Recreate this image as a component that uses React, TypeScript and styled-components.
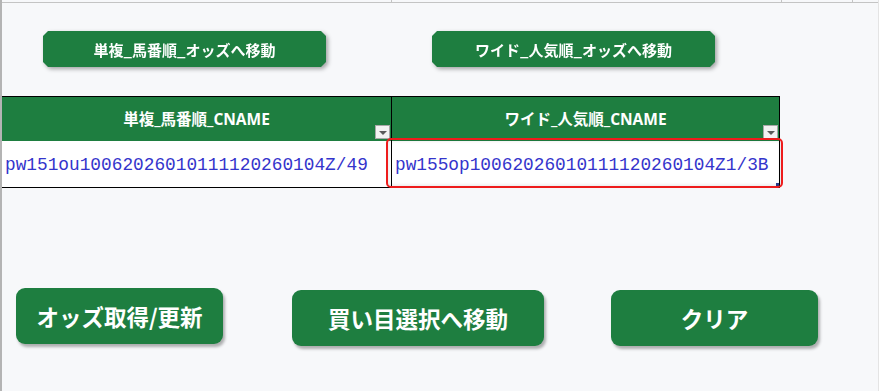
import styled, { createGlobalStyle } from "styled-components";

const GlobalStyle = createGlobalStyle`
  html, body {
    margin: 0;
    padding: 0;
    background: #f7f8fa;
  }
`;

const GREEN = "#1e7e40";

const Page = styled.div`
  position: relative;
  width: 879px;
  height: 391px;
  box-sizing: border-box;
  border-left: 2px solid #b4b4b4;
  border-right: 1px solid #e4e4e4;
  background: #f7f8fa;
  font-family: "Open Sans", "Noto Sans CJK JP", sans-serif;
  overflow: hidden;

  &::before {
    content: "";
    position: absolute;
    left: -2px;
    top: 212px;
    width: 2px;
    height: 25px;
    background: ${GREEN};
  }
`;

const TopStrip = styled.div`
  display: flex;
  height: 2px;
  border-bottom: 1px solid #c4c4c4;
`;

const StripCell = styled.div<{ $w: number }>`
  width: ${(p) => p.$w}px;
  flex: none;
  border-right: 1px solid #c4c4c4;
`;

const TopButtons = styled.div`
  display: flex;
  gap: 106px;
  padding: 28px 0 0 41px;
`;

const SnipShadow = styled.div`
  filter: drop-shadow(2px 2px 2px rgba(0, 0, 0, 0.35));
`;

const SnipButton = styled.button`
  display: flex;
  align-items: center;
  justify-content: center;
  width: 283px;
  height: 36px;
  border: none;
  padding: 0;
  background: ${GREEN};
  color: #fff;
  font-family: "Noto Sans CJK JP", sans-serif;
  font-size: 15px;
  font-weight: 700;
  clip-path: polygon(
    5px 0,
    calc(100% - 5px) 0,
    100% 5px,
    100% calc(100% - 5px),
    calc(100% - 5px) 100%,
    5px 100%,
    0 calc(100% - 5px),
    0 5px
  );
`;

const TableWrap = styled.div`
  position: relative;
  margin-top: 29px;
  width: 778px;
`;

const Table = styled.div`
  display: grid;
  grid-template-columns: 390px 388px;
`;

const HeadCell = styled.div`
  position: relative;
  display: flex;
  align-items: center;
  justify-content: center;
  height: 45px;
  box-sizing: border-box;
  padding-bottom: 2px;
  border-top: 1px solid #000;
  border-right: 1px solid #000;
  background: ${GREEN};
  color: #fff;
  font-size: 15.5px;
  font-weight: 700;
`;

const FilterBtn = styled.div`
  position: absolute;
  right: 1px;
  bottom: 2px;
  width: 15px;
  height: 14px;
  box-sizing: border-box;
  background: #f2f2f2;
  border: 1px solid #a8a8a8;
  display: flex;
  align-items: center;
  justify-content: center;

  &::after {
    content: "";
    border-left: 4px solid transparent;
    border-right: 4px solid transparent;
    border-top: 4px solid #5a5a5a;
    margin-top: 1px;
  }
`;

const DataCell = styled.div`
  position: relative;
  display: flex;
  align-items: center;
  height: 47px;
  box-sizing: border-box;
  padding: 1px 0 0 3px;
  background: #fff;
  border-bottom: 1px solid #000;
  border-right: 1px solid #000;
  color: #3434cc;
  font-family: "Liberation Mono", monospace;
  font-size: 17.8px;
  white-space: nowrap;
`;

const FillHandle = styled.div`
  position: absolute;
  right: 0;
  bottom: 1px;
  width: 3px;
  height: 3px;
  background: #2a3f8f;
`;

const Highlight = styled.div`
  position: absolute;
  left: 384px;
  top: 42px;
  width: 397px;
  height: 50px;
  box-sizing: border-box;
  border: 2px solid #ee1c1c;
  border-radius: 5px;
  box-shadow: inset 0 0 4px rgba(0, 0, 0, 0.14);
  pointer-events: none;
`;

const BottomButtons = styled.div`
  display: flex;
  align-items: flex-start;
  padding: 102px 0 0 14px;
`;

const BigButton = styled.button<{ $w: number; $ml?: number; $up?: number }>`
  display: flex;
  align-items: center;
  justify-content: center;
  width: ${(p) => p.$w}px;
  height: 56px;
  margin-left: ${(p) => p.$ml ?? 0}px;
  margin-top: ${(p) => -(p.$up ?? 0)}px;
  padding: 0;
  border: none;
  border-radius: 9px;
  background: ${GREEN};
  color: #fff;
  font-family: "Noto Sans CJK JP", sans-serif;
  font-size: 22.5px;
  font-weight: 700;
  box-shadow: 2px 3px 3px rgba(0, 0, 0, 0.3);
`;

export default function App() {
  return (
    <>
      <GlobalStyle />
      <Page>
        <TopStrip>
          <StripCell $w={389} />
          <StripCell $w={389} />
          <StripCell $w={70} />
        </TopStrip>
        <TopButtons>
          <SnipShadow>
            <SnipButton>単複_馬番順_オッズへ移動</SnipButton>
          </SnipShadow>
          <SnipShadow>
            <SnipButton>ワイド_人気順_オッズへ移動</SnipButton>
          </SnipShadow>
        </TopButtons>
        <TableWrap>
          <Table>
            <HeadCell>
              単複_馬番順_CNAME
              <FilterBtn />
            </HeadCell>
            <HeadCell>
              ワイド_人気順_CNAME
              <FilterBtn />
            </HeadCell>
            <DataCell>pw151ou10062026010111120260104Z/49</DataCell>
            <DataCell>
              pw155op10062026010111120260104Z1/3B
              <FillHandle />
            </DataCell>
          </Table>
          <Highlight />
        </TableWrap>
        <BottomButtons>
          <BigButton $w={207} $up={2}>
            オッズ取得/更新
          </BigButton>
          <BigButton $w={252} $ml={69}>
            買い目選択へ移動
          </BigButton>
          <BigButton $w={207} $ml={67}>
            クリア
          </BigButton>
        </BottomButtons>
      </Page>
    </>
  );
}
